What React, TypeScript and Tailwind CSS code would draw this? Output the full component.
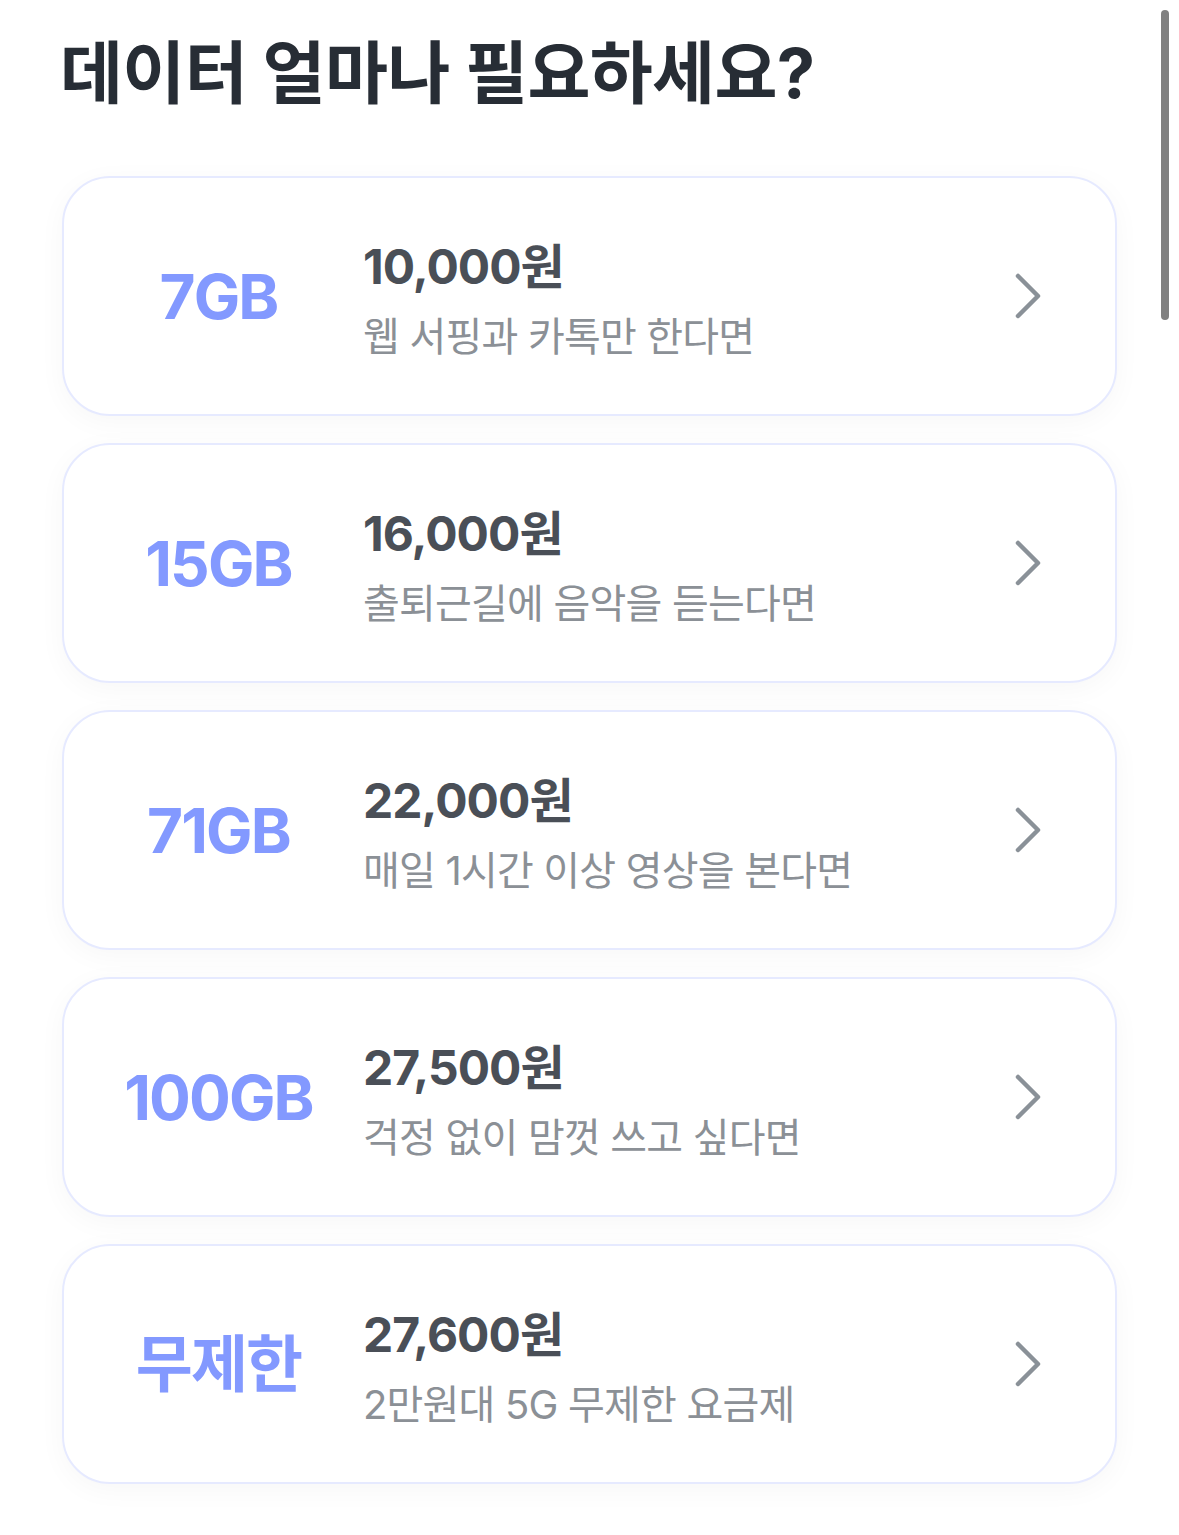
import React from 'react';

type Plan = {
  data: string;
  price: string;
  desc: string;
};

const plans: Plan[] = [
  { data: '7GB', price: '10,000원', desc: '웹 서핑과 카톡만 한다면' },
  { data: '15GB', price: '16,000원', desc: '출퇴근길에 음악을 듣는다면' },
  { data: '71GB', price: '22,000원', desc: '매일 1시간 이상 영상을 본다면' },
  { data: '100GB', price: '27,500원', desc: '걱정 없이 맘껏 쓰고 싶다면' },
  { data: '무제한', price: '27,600원', desc: '2만원대 5G 무제한 요금제' },
];

const Chevron = () => (
  <svg width="30" height="48" viewBox="0 0 30 48" fill="none" className="shrink-0">
    <path
      d="M5 4 L25 24 L5 44"
      stroke="#8a9198"
      strokeWidth="4.5"
      strokeLinecap="round"
      strokeLinejoin="round"
    />
  </svg>
);

function PlanCard({ plan }: { plan: Plan }) {
  return (
    <button className="flex h-[240px] w-full items-center rounded-[48px] border-2 border-[#e6eaff] bg-white pl-[40px] pr-[72px] text-left shadow-[0_6px_28px_rgba(0,0,0,0.035)]">
      <div className="w-[229px] shrink-0 text-center text-[62px] font-bold tracking-[-0.03em] text-[#8399ff]">
        {plan.data}
      </div>
      <div className="ml-[30px] flex flex-1 flex-col gap-[19px] pt-[12px]">
        <div className="text-[48px] leading-[50px] font-bold tracking-[-0.02em] text-[#4a4f57]">
          {plan.price}
        </div>
        <div className="text-[40px] leading-[52px] font-normal tracking-[-0.02em] text-[#8b9096]">
          {plan.desc}
        </div>
      </div>
      <Chevron />
    </button>
  );
}

export default function App() {
  return (
    <div
      className="relative min-h-[1535px] w-[1179px] bg-white px-[62px] pt-[30px]"
      style={{ fontFamily: 'Inter, "Noto Sans CJK KR", sans-serif' }}
    >
      <h1 className="-ml-[2px] text-[68.5px] leading-[88px] font-bold tracking-[-0.01em] text-[#272d35]">
        데이터 얼마나 필요하세요?
      </h1>
      <div className="mt-[58px] flex flex-col gap-[27px]">
        {plans.map((p) => (
          <PlanCard key={p.data} plan={p} />
        ))}
      </div>
      <div className="absolute right-[10px] top-[10px] h-[310px] w-[8px] rounded-full bg-[#808080]" />
    </div>
  );
}
